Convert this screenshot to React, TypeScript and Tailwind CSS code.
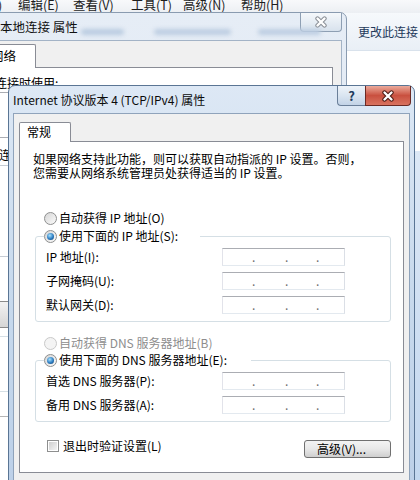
import React from "react";

function Radio({ checked, disabled }: { checked?: boolean; disabled?: boolean }) {
  return (
    <span
      className={`flex h-[13px] w-[13px] shrink-0 items-center justify-center rounded-full border ${
        disabled
          ? "border-[#c9c9c9] bg-[#f4f4f4]"
          : "border-[#8e8f8f] bg-gradient-to-br from-[#d6d6d6] to-[#fbfbfb]"
      }`}
    >
      {checked && (
        <span className="h-[7px] w-[7px] rounded-full bg-[radial-gradient(circle_at_40%_35%,#a8e2fd,#2c7cc2_55%,#10395f)]" />
      )}
    </span>
  );
}

function IpBox() {
  return (
    <div className="flex h-[18px] w-[123px] items-end border border-[#abadb3] border-b-[#e3e9ef] border-l-[#e2e3ea] border-r-[#dbdfe6] bg-white pb-[2px] text-[12px] leading-[12px] text-[#6d6d6d]">
      <span className="w-[29px]" />
      <span className="w-[3px] text-center">.</span>
      <span className="w-[30px]" />
      <span className="w-[3px] text-center">.</span>
      <span className="w-[28px]" />
      <span className="w-[3px] text-center">.</span>
    </div>
  );
}

function Row({ label }: { label: string }) {
  return (
    <div className="flex h-[18px] items-center">
      <span className="w-[176px] whitespace-nowrap leading-[16px]">{label}</span>
      <IpBox />
    </div>
  );
}

function CloseX({ fill, edge }: { fill: string; edge: string }) {
  return (
    <svg width="14" height="12" viewBox="0 0 14 12">
      <path d="M3.5 2.5 L10.5 9.5 M10.5 2.5 L3.5 9.5" stroke={edge} strokeWidth="4.4" strokeLinecap="round" />
      <path d="M3.5 2.5 L10.5 9.5 M10.5 2.5 L3.5 9.5" stroke={fill} strokeWidth="2.4" strokeLinecap="round" />
    </svg>
  );
}

export default function App() {
  return (
    <div className="relative h-[480px] w-[420px] overflow-hidden bg-white font-['Noto_Sans_CJK_SC',sans-serif] text-[12px] text-black">
      {/* ── Explorer window behind ─────────────────────────────── */}
      <div className="flex h-full flex-col">
        <div className="flex h-[13px] shrink-0 overflow-hidden bg-gradient-to-b from-[#f8f9fb] to-[#eceff3] text-[12.5px] leading-[12px] text-[#1e1e1e]">
          <div className="-mt-[1px] flex whitespace-nowrap">
            <span className="w-[20px] -ml-[2px]">)</span>
            <span className="w-[55px]">编辑(E)</span>
            <span className="w-[58px]">查看(V)</span>
            <span className="w-[52px]">工具(T)</span>
            <span className="w-[58px]">高级(N)</span>
            <span>帮助(H)</span>
          </div>
        </div>
        <div className="flex h-[38px] shrink-0 items-center border-b border-[#d9e2ec] bg-gradient-to-b from-[#f6f9fc] to-[#e9eff6] pl-[358px]">
          <span className="whitespace-nowrap text-[12px] text-[#1e395b]">更改此连接</span>
        </div>
        <div className="flex flex-1 justify-end bg-white">
          <div className="mt-[100px] w-[5px] bg-gradient-to-b from-[#dce8f6] to-[#c2d7ef]" />
        </div>
      </div>

      {/* ── Back dialog: 本地连接 属性 ─────────────────────────── */}
      <div className="absolute left-[-30px] top-[12px] flex h-[480px] w-[377px] flex-col rounded-t-[7px] border border-[#8a9bb0] bg-gradient-to-b from-[#e6edf6] to-[#d7e3f0]">
        <div className="relative flex h-[27px] shrink-0 items-start">
          <span className="ml-[29px] mt-[6px] whitespace-nowrap text-[12.5px] leading-[16px] text-[#111]">本地连接 属性</span>
          <span className="absolute left-[110px] top-[16px] h-[6px] w-[43px] rounded-full bg-[#b9cbe0] blur-[2px]" />
          <span className="absolute left-[183px] top-[16px] h-[6px] w-[77px] rounded-full bg-[#bccde1] blur-[2px]" />
          <span className="absolute left-[287px] top-[16px] h-[6px] w-[63px] rounded-full bg-[#bccde1] blur-[2px]" />
          <div className="ml-auto mr-[4px] flex h-[19px] w-[42px] items-center justify-center rounded-b-[4px] border border-t-0 border-[#8e9fb3] bg-gradient-to-b from-[#f5f8fb] to-[#d8e2ed]">
            <CloseX fill="#ffffff" edge="#8a8f96" />
          </div>
        </div>
        <div className="mx-[4px] flex flex-1 flex-col border border-[#a3b3c6] bg-[#f0f0f0] pt-[3px]">
          <div className="relative z-10 ml-[9px] flex h-[24px] w-[51px] items-center rounded-t-[2px] border border-b-0 border-[#898c95] bg-white pl-[5px] text-[12.5px]">
            网络
          </div>
          <div className="-mt-[1px] mr-[8px] flex flex-1 flex-col border border-[#898c95] bg-white">
            <span className="ml-[18px] mt-[8px] whitespace-nowrap leading-[14px]">连接时使用:</span>
            <div className="ml-[16px] mt-[2px] h-[46px] w-[300px] border border-[#abadb3] bg-white" />
            <span className="ml-[10px] mt-[10px] whitespace-nowrap leading-[14px]">此连接使用下列项目(O):</span>
            <div className="ml-[19px] mt-[3px] h-[92px] w-[300px] border border-[#c6ccd4] bg-white" />
            <div className="ml-[12px] mt-[44px] h-[27px] w-[80px] rounded-[3px] border border-[#8a8a8a] bg-gradient-to-b from-[#f2f2f2] to-[#d6d6d6]" />
            <div className="ml-[16px] mt-[8px] h-[56px] w-[300px] border border-[#d5dfe5] bg-white" />
            <div className="ml-[10px] mt-[24px] h-px w-[300px] bg-[#b5b5b5]" />
          </div>
        </div>
      </div>

      {/* ── Front dialog: Internet 协议版本 4 (TCP/IPv4) 属性 ─────── */}
      <div className="absolute left-[8px] top-[85px] flex h-[400px] w-[407px] flex-col rounded-t-[7px] border border-[#5a7594] bg-gradient-to-b from-[#dde8f5] via-[#c8daed] to-[#bcd0e8]">
        <div className="flex h-[27px] shrink-0 items-start">
          <span className="ml-[4px] mt-[6px] whitespace-nowrap text-[12px] leading-[16px] text-[#0b0b0b]">
            Internet 协议版本 4 (TCP/IPv4) 属性
          </span>
          <div className="ml-auto mr-[3px] flex h-[20px]">
            <div className="flex w-[28px] items-center justify-center rounded-bl-[4px] border border-r-0 border-t-0 border-[#6a7f99] bg-gradient-to-b from-[#eef3f9] via-[#dae5f1] to-[#c2d3e7] text-[13px] font-bold leading-none text-[#213b5c]">
              ?
            </div>
            <div className="flex w-[46px] items-center justify-center rounded-br-[4px] border border-t-0 border-[#6b2a24] bg-gradient-to-b from-[#eaa99b] via-[#c9503f] to-[#d8725f]">
              <CloseX fill="#ffffff" edge="#4a1a14" />
            </div>
          </div>
        </div>

        <div className="mx-[4px] flex flex-1 flex-col border border-[#8fa3bb] bg-[#f0f0f0] pt-[8px]">
          {/* Tab */}
          <div className="relative z-10 ml-[5px] flex h-[20px] w-[52px] items-start rounded-t-[2px] border border-b-0 border-[#898c95] bg-white pl-[7px] pt-[1px] leading-[16px]">
            常规
          </div>

          {/* Tab panel */}
          <div className="-mt-[1px] ml-[5px] mr-[5px] flex h-[332px] flex-col border border-[#898c95] bg-white pl-[15px] pr-[12px] pt-[10px]">
            <p className="-ml-[2px] whitespace-nowrap leading-[14px]">
              如果网络支持此功能，则可以获取自动指派的 IP 设置。否则，
              <br />
              您需要从网络系统管理员处获得适当的 IP 设置。
            </p>

            <div className="ml-[9px] mt-[30px] flex h-[16px] items-center gap-[2px]">
              <Radio />
              <span className="whitespace-nowrap leading-[16px]">自动获得 IP 地址(O)</span>
            </div>

            <fieldset className="mt-[2px] rounded-[3px] border border-[#d5dfe5] p-0">
              <legend className="ml-[8px] flex h-[16px] items-center gap-[2px] pr-[22px]">
                <Radio checked />
                <span className="whitespace-nowrap leading-[16px]">使用下面的 IP 地址(S):</span>
              </legend>
              <div className="flex flex-col gap-[6px] pb-[7px] pl-[10px] pt-[4px]">
                <Row label="IP 地址(I):" />
                <Row label="子网掩码(U):" />
                <Row label="默认网关(D):" />
              </div>
            </fieldset>

            <div className="ml-[9px] mt-[13px] flex h-[16px] items-center gap-[2px]">
              <Radio disabled />
              <span className="whitespace-nowrap leading-[16px] text-[#8d8d8d]">自动获得 DNS 服务器地址(B)</span>
            </div>

            <fieldset className="mt-[1px] rounded-[3px] border border-[#d5dfe5] p-0">
              <legend className="ml-[8px] flex h-[16px] items-center gap-[2px] pr-[24px]">
                <Radio checked />
                <span className="whitespace-nowrap leading-[16px]">使用下面的 DNS 服务器地址(E):</span>
              </legend>
              <div className="flex flex-col gap-[6px] pb-[7px] pl-[10px] pt-[4px]">
                <Row label="首选 DNS 服务器(P):" />
                <Row label="备用 DNS 服务器(A):" />
              </div>
            </fieldset>

            <div className="mt-[18px] flex h-[18px] items-center justify-between">
              <div className="mb-[6px] ml-[12px] flex items-center gap-[4px]">
                <span className="flex h-[12px] w-[12px] items-center justify-center border border-[#8e8f8f] bg-white">
                  <span className="h-[8px] w-[8px] bg-gradient-to-br from-[#cfcfcf] to-[#f4f4f4]" />
                </span>
                <span className="whitespace-nowrap leading-[16px]">退出时验证设置(L)</span>
              </div>
              <div className="flex h-[18px] w-[87px] items-center rounded-[3px] border border-[#707070] bg-gradient-to-b from-[#f3f3f3] via-[#e8e8e8] to-[#cfcfcf] pl-[12px] leading-[16px]">
                高级(V)...
              </div>
            </div>
          </div>
        </div>
      </div>
    </div>
  );
}
